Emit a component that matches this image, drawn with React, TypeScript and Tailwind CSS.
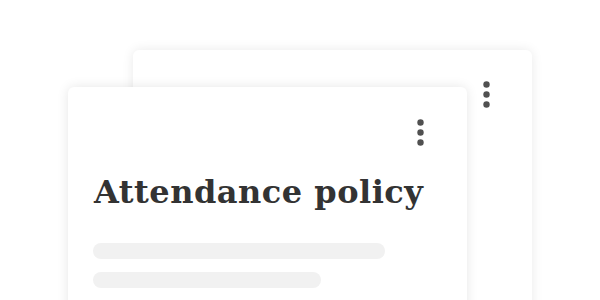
import React from 'react'

const Dots = () => (
  <svg width="7" height="27" viewBox="0 0 7 27" aria-hidden="true">
    <circle cx="3.5" cy="3.5" r="3.2" fill="#505050" />
    <circle cx="3.5" cy="13.5" r="3.2" fill="#505050" />
    <circle cx="3.5" cy="23.5" r="3.2" fill="#505050" />
  </svg>
)

export default function App() {
  return (
    <div className="relative h-[300px] w-[600px] overflow-hidden bg-white">
      {/* back card */}
      <div className="absolute left-[133px] top-[50px] h-[280px] w-[399px] rounded-[6px] bg-white shadow-[0_0_12px_rgba(0,0,0,0.09)]">
        <div className="flex justify-end pr-[42px] pt-[31px]">
          <Dots />
        </div>
      </div>

      {/* front card */}
      <div className="absolute left-[68px] top-[87px] h-[260px] w-[399px] rounded-[6px] bg-white shadow-[0_0_12px_rgba(0,0,0,0.1)]">
        <div className="flex justify-end pr-[43px] pt-[32px]">
          <Dots />
        </div>
        <h1 className="mt-[27px] pl-[26px] font-['DejaVu_Serif',serif] text-[32px] font-bold leading-[38px] tracking-[0.5px] text-[#333]">
          Attendance policy
        </h1>
        <div className="mt-[32px] flex flex-col gap-[13px] pl-[25px]">
          <div className="h-[16px] w-[292px] rounded-full bg-[#f1f1f1]" />
          <div className="h-[16px] w-[228px] rounded-full bg-[#f1f1f1]" />
        </div>
      </div>
    </div>
  )
}
